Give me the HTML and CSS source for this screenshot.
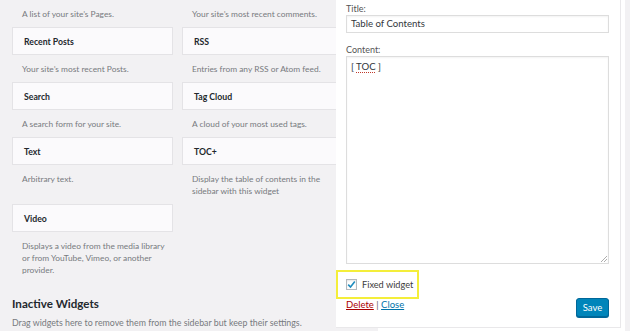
FILE: index.html
```html
<!DOCTYPE html>
<html lang="en">
<head>
    <meta charset="UTF-8">
    <title>Widgets</title>
    <link rel="stylesheet" href="styles.css">
</head>
<body>
    <div class="page">
        <main class="available">
            <div class="widget-grid">
                <!-- top row is scrolled out of view, only the descriptions show -->
                <div class="widget">
                    <div class="widget-top"></div>
                    <p class="widget-desc">A list of your site’s Pages.</p>
                </div>
                <div class="widget">
                    <div class="widget-top"></div>
                    <p class="widget-desc">Your site’s most recent comments.</p>
                </div>
                <div class="widget">
                    <div class="widget-top">Recent Posts</div>
                    <p class="widget-desc">Your site’s most recent Posts.</p>
                </div>
                <div class="widget">
                    <div class="widget-top">RSS</div>
                    <p class="widget-desc">Entries from any RSS or Atom feed.</p>
                </div>
                <div class="widget">
                    <div class="widget-top">Search</div>
                    <p class="widget-desc">A search form for your site.</p>
                </div>
                <div class="widget">
                    <div class="widget-top">Tag Cloud</div>
                    <p class="widget-desc">A cloud of your most used tags.</p>
                </div>
                <div class="widget">
                    <div class="widget-top">Text</div>
                    <p class="widget-desc">Arbitrary text.</p>
                </div>
                <div class="widget">
                    <div class="widget-top">TOC+</div>
                    <p class="widget-desc">Display the table of contents in the sidebar with this widget</p>
                </div>
                <div class="widget">
                    <div class="widget-top">Video</div>
                    <p class="widget-desc">Displays a video from the media library or from YouTube, Vimeo, or another provider.</p>
                </div>
            </div>

            <h2 class="section-title">Inactive Widgets</h2>
            <p class="section-desc">Drag widgets here to remove them from the sidebar but keep their settings.</p>
        </main>

        <aside class="sidebar">
            <div class="sidebar-col">
                <div class="widget-form">
                    <label class="field-label">Title:</label>
                    <div class="text-input">Table of Contents</div>

                    <label class="field-label">Content:</label>
                    <div class="textarea">
                        [ <span class="misspelled">TOC</span> ]
                        <svg class="resize-grip" width="7" height="7" viewBox="0 0 7 7">
                            <path d="M1 7 L7 1 M4 7 L7 4" stroke="#999" stroke-width="0.8" fill="none"/>
                        </svg>
                    </div>

                    <div class="fixed-option">
                        <span class="checkbox">
                            <svg width="9" height="9" viewBox="0 0 9 9">
                                <path d="M1.2 4.6 L3.5 7 L7.8 1.6" stroke="#1e8cbe" stroke-width="1.6" fill="none"/>
                            </svg>
                        </span>
                        <span>Fixed widget</span>
                    </div>

                    <div class="form-actions">
                        <div class="control-links">
                            <a href="#" class="link-delete">Delete</a> | <a href="#" class="link-close">Close</a>
                        </div>
                        <button class="btn-save">Save</button>
                    </div>
                </div>
                <div class="below-form">
                    <div class="below-gap"></div>
                </div>
            </div>
        </aside>
    </div>
</body>
</html>
```

FILE: styles.css
```css
:root {
    --bg: #f2f1f3;
    --card: #fbfafc;
    --border: #e4e3e6;
    --text: #23282d;
    --muted: #777a7e;
}

* {
    margin: 0;
    padding: 0;
    box-sizing: border-box;
}

html, body {
    height: 100%;
}

body {
    font-family: Lato, 'Open Sans', sans-serif;
    background-color: var(--bg);
    color: var(--text);
    overflow: hidden;
}

.page {
    display: flex;
    height: 331px;
}

.available {
    width: 336px;
    flex-shrink: 0;
    padding-left: 12px;
    overflow: hidden;
}

.widget-grid {
    display: grid;
    grid-template-columns: 161px 161px;
    column-gap: 9px;
    margin-top: -28px;
}

.widget-top {
    height: 28px;
    line-height: 27px;
    padding: 0 11px;
    background-color: var(--card);
    border: 1px solid var(--border);
    font-size: 8.7px;
    font-weight: 700;
    color: var(--text);
}

.widget-desc {
    padding: 8px 4px 7px 10px;
    font-size: 8.4px;
    line-height: 12px;
    color: var(--muted);
}

.section-title {
    margin-top: 12px;
    font-size: 11.6px;
    font-weight: 700;
    line-height: 18px;
    color: var(--text);
}

.section-desc {
    margin-top: 4px;
    font-size: 8.8px;
    line-height: 12px;
    color: var(--muted);
}

.sidebar {
    flex: 1;
    display: flex;
    background-color: var(--bg);
}

.sidebar-col {
    width: 289px;
    background-color: #fff;
    display: flex;
    flex-direction: column;
}

.widget-form {
    width: 285px;
    height: 328px;
    padding: 3px 11px 0 10px;
    border-right: 1px solid #e9e8ea;
    border-bottom: 1px solid #e9e8ea;
    background-color: #fff;
}

.field-label {
    display: block;
    font-size: 9px;
    line-height: 12px;
    color: #555;
}

.text-input {
    height: 18px;
    margin-bottom: 11px;
    padding: 0 4px;
    border: 1px solid #dddddd;
    font-size: 9.6px;
    line-height: 16px;
    color: #32373c;
    box-shadow: inset 0 1px 2px rgba(0,0,0,0.05);
}

.textarea {
    position: relative;
    height: 208px;
    padding: 2px 4px;
    border: 1px solid #dddddd;
    font-size: 9.6px;
    line-height: 16px;
    color: #32373c;
    box-shadow: inset 0 1px 2px rgba(0,0,0,0.05);
}

.misspelled {
    text-decoration: underline dotted #c0392b;
    text-underline-offset: 2px;
}

.resize-grip {
    position: absolute;
    right: 1px;
    bottom: 1px;
}

.fixed-option {
    display: flex;
    align-items: center;
    gap: 5px;
    width: 83px;
    height: 29px;
    margin: 6px 0 0 -10px;
    padding-left: 8px;
    border: 2px solid #f4ee3a;
    font-size: 9.2px;
    white-space: nowrap;
    color: #3c3c3c;
}

.checkbox {
    display: flex;
    align-items: center;
    justify-content: center;
    flex-shrink: 0;
    width: 11px;
    height: 11px;
    border: 1px solid #b4b9be;
    background-color: #fff;
    box-shadow: inset 0 1px 2px rgba(0,0,0,0.1);
}

.form-actions {
    display: flex;
    justify-content: space-between;
    align-items: flex-start;
    margin-top: -1px;
}

.control-links {
    font-size: 9.5px;
    line-height: 14px;
    color: #666;
}

.link-delete {
    color: #a00;
}

.link-close {
    color: #0073aa;
}

.btn-save {
    width: 33px;
    height: 19px;
    font-family: inherit;
    font-size: 9.5px;
    color: #fff;
    background-color: #0085ba;
    border: 1px solid #006799;
    border-radius: 3px;
    box-shadow: 0 1px 0 #006799;
}

.below-form {
    flex: 1;
}

.below-gap {
    width: 42px;
    height: 100%;
    background-color: var(--bg);
}
```
